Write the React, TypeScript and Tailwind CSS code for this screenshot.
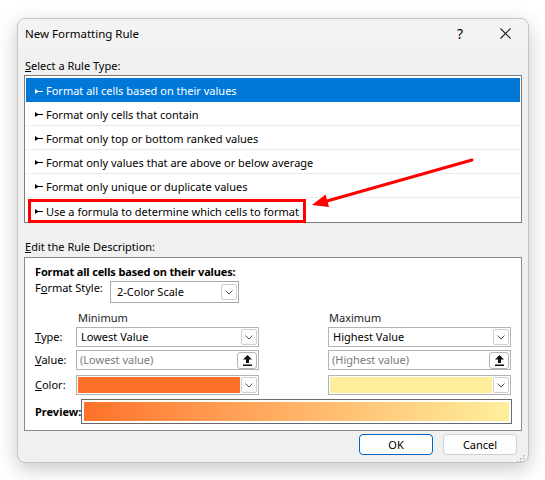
import React from "react";

const rules = [
  "Format all cells based on their values",
  "Format only cells that contain",
  "Format only top or bottom ranked values",
  "Format only values that are above or below average",
  "Format only unique or duplicate values",
  "Use a formula to determine which cells to format",
];

const Bullet = ({ color }: { color: string }) => (
  <svg width="8" height="5" viewBox="0 0 8 5" className="mr-[3px] shrink-0">
    <polygon points="0,0 0,5 3,3 8,3 8,2 3,2" fill={color} />
  </svg>
);

const Chevron = () => (
  <svg width="8" height="5" viewBox="0 0 8 5">
    <polyline points="0.5,0.5 4,4 7.5,0.5" fill="none" stroke="#555" strokeWidth="1" />
  </svg>
);

const DropBtn = () => (
  <div className="w-[16px] h-[16px] mr-[1px] flex items-center justify-center border border-[#cfcfcf] bg-white rounded-[2px]">
    <Chevron />
  </div>
);

const UploadBtn = () => (
  <div className="w-[20px] h-[17px] mr-[1px] flex items-center justify-center border border-[#b5b5b5] bg-white rounded-[3px]">
    <svg width="9" height="11" viewBox="0 0 9 11">
      <polygon points="4.5,0 9,4.5 6,4.5 6,8 3,8 3,4.5 0,4.5" fill="#111" />
      <rect x="0" y="9.5" width="9" height="1.5" fill="#111" />
    </svg>
  </div>
);

const Field = ({ children }: { children: React.ReactNode }) => (
  <div className="h-[20px] flex items-center border border-[#b4b4b4] bg-white">{children}</div>
);

export default function App() {
  return (
    <div className="relative w-[545px] h-[480px] bg-white pt-[18px] pl-[17px] font-['Noto_Sans',sans-serif] text-[11px] text-black leading-[16px]">
      <div className="w-[512px] h-[445px] flex flex-col rounded-[8px] border border-[#c4c4c4] bg-[#f0f0f0] overflow-hidden shadow-[0_6px_20px_rgba(0,0,0,0.22)]">
        {/* title bar */}
        <div className="h-[29px] shrink-0 flex items-center bg-[#f3f3f3] pl-[7px]">
          <span className="text-[11.5px]">New Formatting Rule</span>
          <div className="ml-auto w-[46px] h-full flex items-center justify-center text-[14px]">?</div>
          <div className="w-[45px] h-full flex items-center justify-center">
            <svg width="11" height="11" viewBox="0 0 11 11">
              <path d="M0.5 0.5 L10.5 10.5 M10.5 0.5 L0.5 10.5" stroke="#222" strokeWidth="1.1" />
            </svg>
          </div>
        </div>

        <div className="flex flex-col px-[6px]">
          <div className="mt-[10px] mb-[1px] pl-[1px]">
            <u>S</u>elect a Rule Type:
          </div>
          <div className="h-[148px] w-[498px] border border-[#7d7d7d] bg-white pt-[2px] px-[1px]">
            {rules.map((r, i) => {
              const selected = i === 0;
              const last = i === rules.length - 1;
              return (
                <div
                  key={r}
                  className={
                    selected
                      ? "h-[24px] flex items-center bg-[#0078d7] text-white pl-[9px] pt-[2px]"
                      : last
                      ? "h-[24px] flex items-end"
                      : "h-[24px] flex items-center border-b border-[#ececec] pl-[9px] pt-[2px]"
                  }
                >
                  {last ? (
                    <div className="ml-[2px] -mb-[1px] h-[24px] flex items-center border-[3px] border-[#ff0000] pl-[4px] pr-[4px] pt-[1px]">
                      <Bullet color="#000" />
                      <span>{r}</span>
                    </div>
                  ) : (
                    <>
                      <Bullet color={selected ? "#fff" : "#000"} />
                      <span>{r}</span>
                    </>
                  )}
                </div>
              );
            })}
          </div>

          <div className="mt-[16px] mb-[2px] pl-[1px]">
            <u>E</u>dit the Rule Description:
          </div>
          <div className="h-[174px] w-[498px] border border-[#8a8a8a] bg-white pl-[10px] pt-[6px]">
            <div className="font-bold tracking-[-0.15px]">Format all cells based on their values:</div>
            <div className="flex items-start mt-[1px]">
              <div className="w-[75px] -mt-[1px]">
                F<u>o</u>rmat Style:
              </div>
              <div className="w-[129px] h-[22px] flex items-center border border-[#a9a9a9] bg-white pl-[6px]">
                <span className="flex-1">2-Color Scale</span>
                <DropBtn />
              </div>
            </div>

            <div className="grid grid-cols-[41px_183px_69px_183px] mt-[7px] items-center">
              <div />
              <div className="pl-[2px] text-[#222]">Minimum</div>
              <div />
              <div className="pl-[1px] text-[#222]">Maximum</div>
            </div>

            <div className="grid grid-cols-[41px_183px_69px_183px] mt-[1px] items-center">
              <div>
                <u>T</u>ype:
              </div>
              <Field>
                <span className="flex-1 pl-[4px]">Lowest Value</span>
                <DropBtn />
              </Field>
              <div />
              <Field>
                <span className="flex-1 pl-[4px]">Highest Value</span>
                <DropBtn />
              </Field>
            </div>

            <div className="grid grid-cols-[41px_183px_69px_183px] mt-[3px] items-center">
              <div>
                <u>V</u>alue:
              </div>
              <Field>
                <span className="flex-1 pl-[3px] text-[#7a7a7a]">(Lowest value)</span>
                <UploadBtn />
              </Field>
              <div />
              <Field>
                <span className="flex-1 pl-[3px] text-[#7a7a7a]">(Highest value)</span>
                <UploadBtn />
              </Field>
            </div>

            <div className="grid grid-cols-[41px_183px_69px_183px] mt-[5px] items-center">
              <div>
                <u>C</u>olor:
              </div>
              <Field>
                <div className="flex-1 h-[16px] ml-[1px] mr-[1px] bg-[#ff7128]" />
                <DropBtn />
              </Field>
              <div />
              <Field>
                <div className="flex-1 h-[16px] ml-[1px] mr-[1px] bg-[#ffef9c]" />
                <DropBtn />
              </Field>
            </div>

            <div className="flex items-center mt-[4px]">
              <div className="w-[46px] font-bold">Preview:</div>
              <div className="w-[431px] h-[25px] border border-[#6a6a6a] bg-white p-[2px]">
                <div className="h-full bg-gradient-to-r from-[#ff7128] to-[#ffef9c]" />
              </div>
            </div>
          </div>

          <div className="flex justify-end gap-[10px] mt-[3px] pr-[5px]">
            <button className="w-[74px] h-[21px] rounded-[4px] border border-[#0067c0] bg-[#fdfdfd] text-[11px]">
              OK
            </button>
            <button className="w-[74px] h-[21px] rounded-[4px] border border-[#d0d0d0] bg-[#fdfdfd] text-[11px]">
              Cancel
            </button>
          </div>
        </div>
        <div className="mt-auto flex justify-end pr-[3px] pb-[2px]">
          <svg width="8" height="8" viewBox="0 0 8 8">
            <g fill="#b0b0b0">
              <rect x="6" y="0" width="1.5" height="1.5" />
              <rect x="3" y="3" width="1.5" height="1.5" />
              <rect x="6" y="3" width="1.5" height="1.5" />
              <rect x="0" y="6" width="1.5" height="1.5" />
              <rect x="3" y="6" width="1.5" height="1.5" />
              <rect x="6" y="6" width="1.5" height="1.5" />
            </g>
          </svg>
        </div>
      </div>

      {/* annotation arrow */}
      <svg className="absolute left-0 top-0 pointer-events-none" width="545" height="480">
        <line x1="472" y1="160" x2="327" y2="201" stroke="#ff0000" strokeWidth="3" strokeLinecap="round" />
        <polygon points="312,205 329,207 325.5,194.5" fill="#ff0000" />
      </svg>
    </div>
  );
}
